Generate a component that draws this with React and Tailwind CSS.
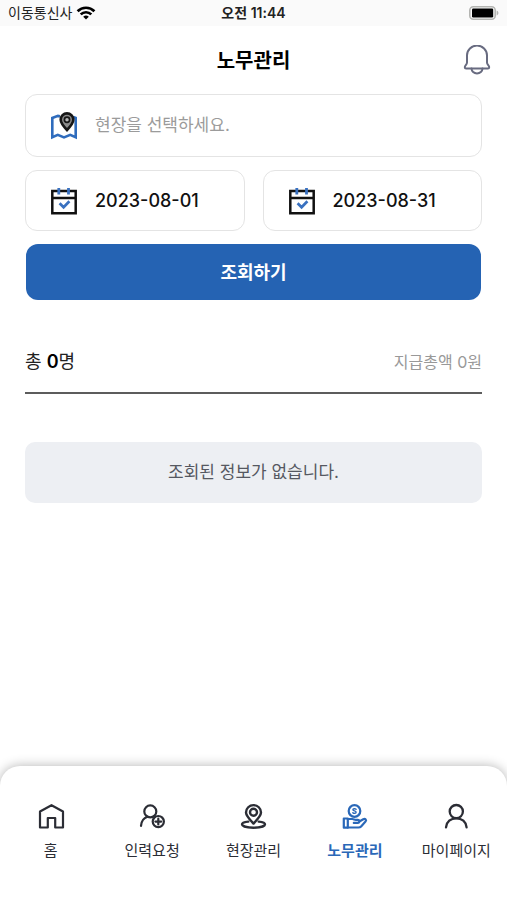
import React, { useState } from 'react';

const stroke = {
  fill: 'none',
  stroke: 'currentColor',
  strokeLinejoin: 'round',
  strokeLinecap: 'round',
};

// Icons
function WifiIcon() {
  return (
    <svg className="h-4 w-5" viewBox="0 0 20 16" fill="none" stroke="#000" strokeWidth="2.7" aria-hidden="true">
      <path d="M1.6 6.2a12 12 0 0 1 16.8 0" />
      <path d="M4.7 9.4a7.6 7.6 0 0 1 10.6 0" />
      <path d="M10 14.6 7.2 11.8a4 4 0 0 1 5.6 0Z" fill="#000" stroke="none" />
    </svg>
  );
}

function BatteryIcon() {
  return (
    <svg className="h-4 w-8" viewBox="0 0 32 16" aria-hidden="true">
      <rect x="2.8" y="1.7" width="25.4" height="12.6" rx="3.5" fill="#fafafa" stroke="#b4b5b2" strokeWidth="1.6" />
      <rect x="5" y="3.6" width="21.2" height="8.8" rx="1.2" fill="#000" />
      <path d="M29.6 5.6c1.4.6 1.8 1.4 1.8 2.4s-.4 1.8-1.8 2.4Z" fill="#b4b5b2" />
    </svg>
  );
}

function BellIcon() {
  return (
    <svg className="h-8 w-7" viewBox="0 0 28 32" {...stroke} strokeWidth="2" aria-hidden="true">
      <path d="M4 17.5V10.2a10 9.6 0 0 1 20 0v7.3c0 2.200 2.200 3 2.200 4.700 0 .8-.6 1.200-1.300 1.200H3.100c-.7 0-1.300-.4-1.300-1.200 0-1.700 2.200-2.500 2.200-4.700Z" />
      <path d="M8.500 23.600a5.500 4.800 0 0 0 11 0" />
    </svg>
  );
}

function MapIcon() {
  return (
    <svg className="h-7 w-7 shrink-0" viewBox="0 0 28 28" fill="none" aria-hidden="true">
      <path d="M10 4.200 8 3.900 2.300 6v19.200l5.500-2.400 6.200 2.600 6.200-2.600 5.500 2.400V6l-2.500-1" stroke="#2f6cbd" strokeWidth="2.600" />
      <path d="M17 18c-4-4.300-6.300-7-6.300-10.300a6.300 6.300 0 0 1 12.600 0C23.300 11 21 13.700 17 18Z" fill="#8a8a8a" stroke="#161616" strokeWidth="2.600" />
      <circle cx="17" cy="7.700" r="2.600" fill="#b5b5b5" stroke="#161616" strokeWidth="1.700" />
    </svg>
  );
}

function CalendarIcon() {
  return (
    <svg className="h-7 w-7 shrink-0" viewBox="0 0 28 28" fill="none" aria-hidden="true">
      <path d="M2.300 4h23.400v22.200H2.300ZM2.300 11h23.400" stroke="#111" strokeWidth="2.500" />
      <path d="M8.800 1v6.600M18.500 1v6.600" stroke="#3971c0" strokeWidth="2.800" />
      <path d="m9.600 16.200 4 4 5.800-6" stroke="#3971c0" strokeWidth="2.700" />
    </svg>
  );
}

function HomeIcon() {
  return (
    <svg className="h-7 w-7" viewBox="0 0 28 28" {...stroke} strokeWidth="2.200" aria-hidden="true">
      <path d="M14.500 2.200 3 8.500v16h7.800V15h7.400v9.500H26v-16Z" />
    </svg>
  );
}

function RequestIcon() {
  return (
    <svg className="h-7 w-7" viewBox="0 0 28 28" {...stroke} strokeWidth="2.200" aria-hidden="true">
      <circle cx="12.300" cy="8.400" r="6" />
      <path d="M3 22.800c.4-4.400 2.800-7.800 6.400-9" />
      <circle cx="20.300" cy="18.600" r="5.600" />
      <path d="M20.300 15.700v5.800M17.400 18.600h5.800" />
    </svg>
  );
}

function SiteIcon() {
  return (
    <svg className="h-7 w-7" viewBox="0 0 28 28" {...stroke} strokeWidth="2.400" aria-hidden="true">
      <path d="M14.500 20.600C10 15.700 7 12.600 7 9.400a7.500 7.300 0 0 1 15 0c0 3.200-3 6.300-7.500 11.200Z" />
      <circle cx="14.500" cy="9.200" r="3.500" />
      <path d="M9.300 18.600c-3.900.4-6.300 1.400-6.300 2.700 0 2 5.100 3.400 11.500 3.400S26 23.300 26 21.300c0-1.300-2.400-2.300-6.300-2.700" />
    </svg>
  );
}

function LaborIcon() {
  return (
    <svg className="h-7 w-7" viewBox="0 0 28 28" {...stroke} strokeWidth="2.200" aria-hidden="true">
      <circle cx="13.500" cy="8" r="5.800" />
      <path d="M15.100 6.300c-1-.8-3.200-.7-3.200.5s3.200 1 3.200 2.400-2.400 1.400-3.300.5" strokeWidth="1.400" />
      <path d="M2.800 15.500h4v9.200h-4Z" />
      <path d="M6.800 16h4.500c1.500 0 2 .8 3.500.8h1.900c2.200 0 2.200 3.100 0 3.100h-3.900M18.300 18.500l4-2.300c2-1 3.600.8 2.200 2.300l-4.400 4.900c-.8.900-1.500 1.100-2.600 1.100H6.800" />
    </svg>
  );
}

function UserIcon() {
  return (
    <svg className="h-7 w-7" viewBox="0 0 28 28" {...stroke} strokeWidth="2.300" aria-hidden="true">
      <circle cx="14.300" cy="8.600" r="6.600" />
      <path d="M4 24.300c.5-5.500 4.700-9 10.300-9s9.800 3.500 10.300 9" />
    </svg>
  );
}

const TABS = [
  { id: 'home', label: '홈', icon: HomeIcon },
  { id: 'request', label: '인력요청', icon: RequestIcon },
  { id: 'site', label: '현장관리', icon: SiteIcon },
  { id: 'labor', label: '노무관리', icon: LaborIcon },
  { id: 'mypage', label: '마이페이지', icon: UserIcon },
];

function StatusBar() {
  return (
    <div className="grid h-[26px] grid-cols-3 items-center bg-[#fafafa] px-2 text-sm text-[#222]">
      <div className="flex items-center gap-1">
        <span>이동통신사</span>
        <WifiIcon />
      </div>
      <span className="text-center font-semibold">오전 11:44</span>
      <div className="flex justify-end">
        <BatteryIcon />
      </div>
    </div>
  );
}

function Header() {
  return (
    <header className="grid h-[68px] grid-cols-[1fr_auto_1fr] items-center px-4 pt-0.5">
      <h1 className="col-start-2 text-xl font-bold text-black">노무관리</h1>
      <button type="button" aria-label="알림" className="justify-self-end text-[#686b80]">
        <BellIcon />
      </button>
    </header>
  );
}

function DateField({ label, value, onChange }) {
  return (
    <label className="flex h-[61px] min-w-0 flex-1 items-center gap-[17px] rounded-xl border border-[#e4e4e4] px-6">
      <CalendarIcon />
      <input
        type="text"
        aria-label={label}
        value={value}
        onChange={(e) => onChange(e.target.value)}
        className="w-full min-w-0 text-lg font-medium text-[#111] outline-none"
      />
    </label>
  );
}

function BottomNavigation({ active, onChange }) {
  return (
    <nav className="grid h-[134px] grid-cols-5 items-start rounded-t-[20px] bg-white pt-[37px] shadow-[0_0_12px_rgba(0,0,0,0.3)]">
      {TABS.map(({ id, label, icon: Icon }) => (
        <a
          key={id}
          href={`#${id}`}
          onClick={() => onChange(id)}
          aria-current={active === id ? 'page' : undefined}
          className={`flex flex-col items-center gap-2 text-[15px] leading-6 ${
            active === id ? 'font-bold text-[#2a68b8]' : 'text-[#2b2d35]'
          }`}
        >
          <Icon />
          {label}
        </a>
      ))}
    </nav>
  );
}

function App() {
  const [site, setSite] = useState('');
  const [from, setFrom] = useState('2023-08-01');
  const [to, setTo] = useState('2023-08-31');
  const [tab, setTab] = useState('labor');

  return (
    <div className="flex min-h-screen flex-col bg-white font-[Inter,'Noto_Sans_CJK_KR',sans-serif]">
      <StatusBar />
      <Header />

      <main className="flex-1 px-[25px]">
        {/* Search form */}
        <form className="flex flex-col gap-[13px]" onSubmit={(e) => e.preventDefault()}>
          <label className="flex h-[63px] items-center gap-[17px] rounded-xl border border-[#e4e4e4] px-6">
            <MapIcon />
            <input
              type="text"
              aria-label="현장"
              placeholder="현장을 선택하세요."
              value={site}
              onChange={(e) => setSite(e.target.value)}
              className="w-full min-w-0 text-[17px] outline-none placeholder:text-[#9b9b9b]"
            />
          </label>
          <div className="flex gap-[18px]">
            <DateField label="시작일" value={from} onChange={setFrom} />
            <DateField label="종료일" value={to} onChange={setTo} />
          </div>
          <button type="submit" className="mx-px h-14 rounded-xl bg-[#2563b3] pt-0.5 text-lg font-bold text-white">
            조회하기
          </button>
        </form>

        {/* Summary */}
        <div className="mt-12 flex items-center justify-between border-b-2 border-[#5c5c5c] pb-4">
          <p className="text-lg text-[#222]">
            총 <b className="font-semibold text-black">0</b>명
          </p>
          <p className="text-base text-[#999]">지급총액 0원</p>
        </div>

        <p className="mt-12 flex h-[61px] items-center justify-center rounded-[10px] bg-[#edeff3] text-[17px] text-[#555861]">
          조회된 정보가 없습니다.
        </p>
      </main>

      <BottomNavigation active={tab} onChange={setTab} />
    </div>
  );
}

export default App;
